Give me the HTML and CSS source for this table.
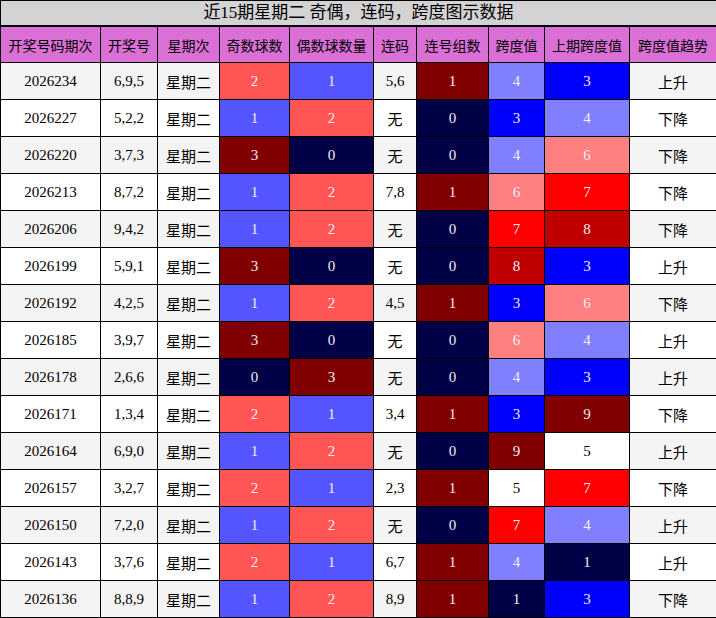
FILE: index.html
```html
<!DOCTYPE html>
<html lang="zh">
<head>
<meta charset="utf-8">
<link rel="stylesheet" href="styles.css">
</head>
<body>
<table class="chart">
<colgroup>
<col class="c1"><col class="c2"><col class="c3"><col class="c4"><col class="c5"><col class="c6"><col class="c7"><col class="c8"><col class="c9"><col class="c10">
</colgroup>
<thead>
<tr class="title-row"><th colspan="10">近15期星期二 奇偶，连码，跨度图示数据</th></tr>
<tr class="head-row"><th>开奖号码期次</th><th>开奖号</th><th>星期次</th><th>奇数球数</th><th>偶数球数量</th><th>连码</th><th>连号组数</th><th>跨度值</th><th>上期跨度值</th><th>跨度值趋势</th></tr>
</thead>
<tbody>
<tr class="alt"><td>2026234</td><td>6,9,5</td><td class="cn">星期二</td><td class="n2">2</td><td class="n1">1</td><td>5,6</td><td class="k1">1</td><td class="s4">4</td><td class="s3">3</td><td class="cn">上升</td></tr>
<tr><td>2026227</td><td>5,2,2</td><td class="cn">星期二</td><td class="n1">1</td><td class="n2">2</td><td class="cn">无</td><td class="k0">0</td><td class="s3">3</td><td class="s4">4</td><td class="cn">下降</td></tr>
<tr class="alt"><td>2026220</td><td>3,7,3</td><td class="cn">星期二</td><td class="n3">3</td><td class="n0">0</td><td class="cn">无</td><td class="k0">0</td><td class="s4">4</td><td class="s6">6</td><td class="cn">下降</td></tr>
<tr><td>2026213</td><td>8,7,2</td><td class="cn">星期二</td><td class="n1">1</td><td class="n2">2</td><td>7,8</td><td class="k1">1</td><td class="s6">6</td><td class="s7">7</td><td class="cn">下降</td></tr>
<tr class="alt"><td>2026206</td><td>9,4,2</td><td class="cn">星期二</td><td class="n1">1</td><td class="n2">2</td><td class="cn">无</td><td class="k0">0</td><td class="s7">7</td><td class="s8">8</td><td class="cn">下降</td></tr>
<tr><td>2026199</td><td>5,9,1</td><td class="cn">星期二</td><td class="n3">3</td><td class="n0">0</td><td class="cn">无</td><td class="k0">0</td><td class="s8">8</td><td class="s3">3</td><td class="cn">上升</td></tr>
<tr class="alt"><td>2026192</td><td>4,2,5</td><td class="cn">星期二</td><td class="n1">1</td><td class="n2">2</td><td>4,5</td><td class="k1">1</td><td class="s3">3</td><td class="s6">6</td><td class="cn">下降</td></tr>
<tr><td>2026185</td><td>3,9,7</td><td class="cn">星期二</td><td class="n3">3</td><td class="n0">0</td><td class="cn">无</td><td class="k0">0</td><td class="s6">6</td><td class="s4">4</td><td class="cn">上升</td></tr>
<tr class="alt"><td>2026178</td><td>2,6,6</td><td class="cn">星期二</td><td class="n0">0</td><td class="n3">3</td><td class="cn">无</td><td class="k0">0</td><td class="s4">4</td><td class="s3">3</td><td class="cn">上升</td></tr>
<tr><td>2026171</td><td>1,3,4</td><td class="cn">星期二</td><td class="n2">2</td><td class="n1">1</td><td>3,4</td><td class="k1">1</td><td class="s3">3</td><td class="s9">9</td><td class="cn">下降</td></tr>
<tr class="alt"><td>2026164</td><td>6,9,0</td><td class="cn">星期二</td><td class="n1">1</td><td class="n2">2</td><td class="cn">无</td><td class="k0">0</td><td class="s9">9</td><td class="s5">5</td><td class="cn">上升</td></tr>
<tr><td>2026157</td><td>3,2,7</td><td class="cn">星期二</td><td class="n2">2</td><td class="n1">1</td><td>2,3</td><td class="k1">1</td><td class="s5">5</td><td class="s7">7</td><td class="cn">下降</td></tr>
<tr class="alt"><td>2026150</td><td>7,2,0</td><td class="cn">星期二</td><td class="n1">1</td><td class="n2">2</td><td class="cn">无</td><td class="k0">0</td><td class="s7">7</td><td class="s4">4</td><td class="cn">上升</td></tr>
<tr><td>2026143</td><td>3,7,6</td><td class="cn">星期二</td><td class="n2">2</td><td class="n1">1</td><td>6,7</td><td class="k1">1</td><td class="s4">4</td><td class="s1">1</td><td class="cn">上升</td></tr>
<tr class="alt"><td>2026136</td><td>8,8,9</td><td class="cn">星期二</td><td class="n1">1</td><td class="n2">2</td><td>8,9</td><td class="k1">1</td><td class="s1">1</td><td class="s3">3</td><td class="cn">下降</td></tr>
</tbody>
</table>
</body>
</html>
```
FILE: styles.css
```css
html, body {
  margin: 0;
  padding: 0;
  background: #fff;
}
.chart {
  border-collapse: collapse;
  table-layout: fixed;
  width: 716px;
  font-family: "Liberation Serif", "Noto Sans CJK SC", serif;
  color: #000;
}
.c1 { width: 100px; }
.c2 { width: 57px; }
.c3 { width: 62px; }
.c4 { width: 70px; }
.c5 { width: 84px; }
.c6 { width: 43px; }
.c7 { width: 72px; }
.c8 { width: 56px; }
.c9 { width: 85px; }
.c10 { width: 87px; }
.chart th, .chart td {
  border: 1px solid #000;
  padding: 0;
  text-align: center;
  vertical-align: middle;
  font-weight: normal;
  white-space: nowrap;
  overflow: hidden;
}
.title-row th {
  height: 24px;
  background: #d3d3d3;
  font-size: 17px;
  border-bottom: 2px solid #000;
  line-height: 24px;
}
.head-row th {
  height: 35px;
  background: #da70d6;
  font-size: 14px;
  font-family: "Noto Sans CJK SC", sans-serif;
}
.chart td {
  height: 36px;
  font-size: 15px;
  background: #fff;
}
.chart tr.alt td {
  background: #f4f4f4;
}
.chart td.cn {
  font-size: 15px;
  font-family: "Noto Sans CJK SC", sans-serif;
}
.chart tr td.n0, .chart tr td.k0, .chart tr td.s1 { background: #000046; color: #eee; }
.chart tr td.n1 { background: #5555ff; color: #eee; }
.chart tr td.n2 { background: #ff5555; color: #eee; }
.chart tr td.n3, .chart tr td.k1, .chart tr td.s9 { background: #800000; color: #eee; }
.chart tr td.s3 { background: #0000ff; color: #eee; }
.chart tr td.s4 { background: #8080ff; color: #eee; }
.chart tr td.s5 { background: #fff; color: #000; }
.chart tr td.s6 { background: #ff8080; color: #eee; }
.chart tr td.s7 { background: #ff0000; color: #eee; }
.chart tr td.s8 { background: #c00000; color: #eee; }
```
